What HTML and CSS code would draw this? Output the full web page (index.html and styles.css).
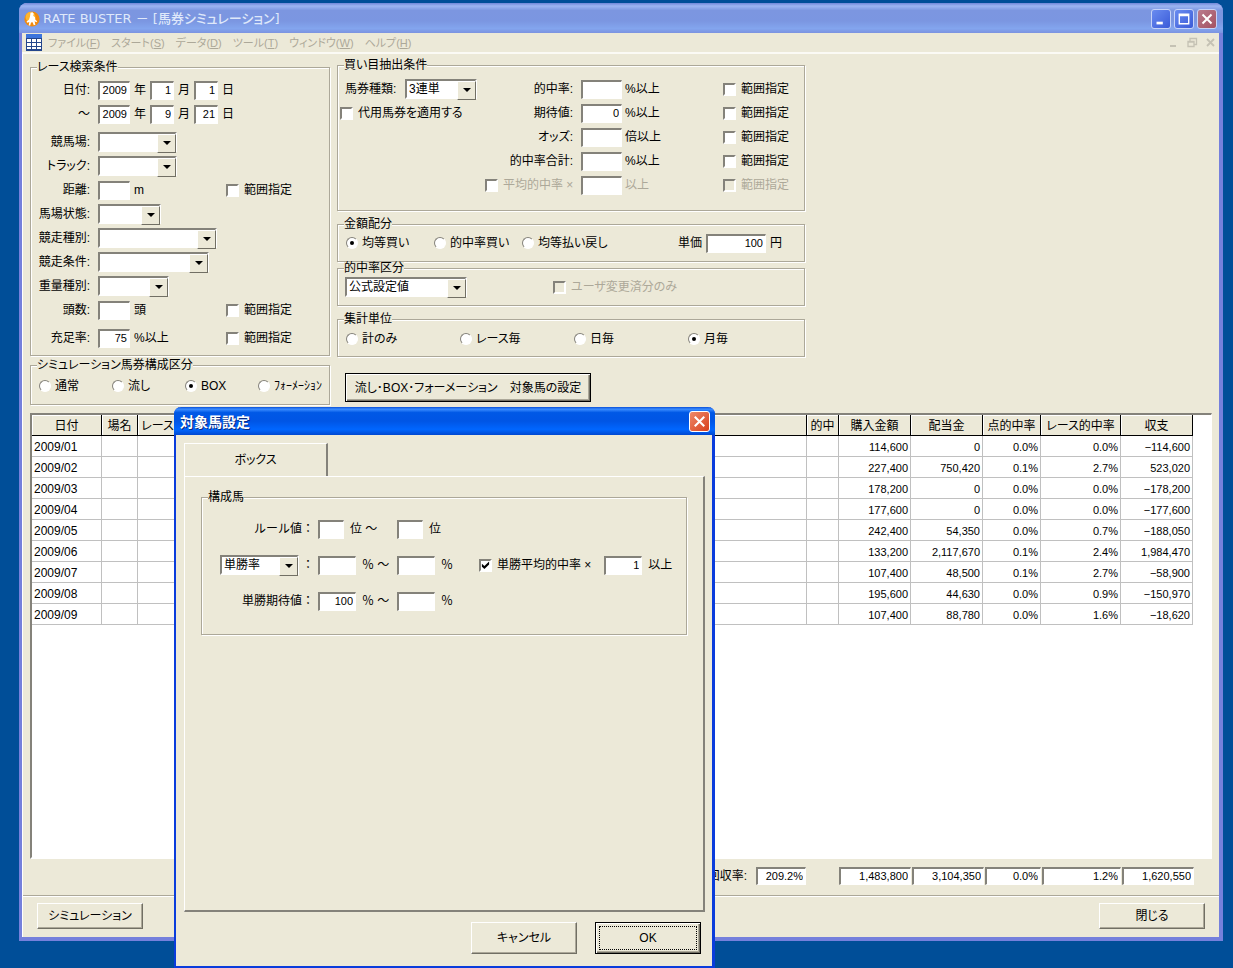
FILE: index.html
```html
<!DOCTYPE html>
<html lang="ja">
<head>
  <meta charset="UTF-8">
  <meta name="viewport" content="width=device-width, initial-scale=1.0">
  <title>RATE BUSTER - [馬券シミュレーション]</title>
  <link rel="stylesheet" href="styles.css">
</head>
<body>
  <div class="window">
    <header class="titlebar">
      <svg class="app-icon" viewBox="0 0 16 16">
        <circle cx="8" cy="8" r="7.6" fill="#f28a0c"/>
        <circle cx="6.5" cy="6" r="5" fill="#ffb52e"/>
        <path d="M6.500 1.800l2-.6 1.300 1.500-.6 2 1.800 1.600.4 2.500 1.800 1.500-.8.900-1.800-1 .8 3.600-1.600.4-1.200-3-1.600.2-.8 3.200H4.700l.6-3.600-2 .8-.8-1 2.600-2.200L6 5.500z" fill="#fff"/>
      </svg>
      <h1>RATE BUSTER － [馬券シミュレーション]</h1>
      <div class="caption-buttons">
        <button type="button" class="caption" aria-label="最小化"><svg viewBox="0 0 20 20"><path d="M5 13h7v3H5z" fill="#fff"/></svg></button>
        <button type="button" class="caption" aria-label="最大化"><svg viewBox="0 0 20 20"><path d="M4 4h12v12H4zM5.500 7v7.500h9V7z" fill="#fff" fill-rule="evenodd"/></svg></button>
        <button type="button" class="caption dim-close" aria-label="閉じる"><svg viewBox="0 0 20 20"><path d="M5 5l10 10M15 5L5 15" stroke="#fff" stroke-width="2.200"/></svg></button>
      </div>
    </header>

    <nav class="menubar">
      <svg class="mdi-icon" viewBox="0 0 16 17">
        <path d="M0 0h16v17H0z" fill="#24468c"/>
        <path d="M0 0h16v4H0z" fill="#3c74dc"/>
        <path d="M1 5h4v3H1zM6 5h4v3H6zM11 5h4v3h-4zM1 9h4v3H1zM6 9h4v3H6zM11 9h4v3h-4zM1 13h4v2H1zM6 13h4v2H6zM11 13h4v2h-4z" fill="#fff"/>
      </svg>
      <a href="#">ファイル(<u>F</u>)</a>
      <a href="#">スタート(<u>S</u>)</a>
      <a href="#">データ(<u>D</u>)</a>
      <a href="#">ツール(<u>T</u>)</a>
      <a href="#">ウィンドウ(<u>W</u>)</a>
      <a href="#">ヘルプ(<u>H</u>)</a>
      <svg class="mdi-buttons" viewBox="0 0 48 12" fill="none" stroke="#c5c2b4">
        <path d="M2 9h6" stroke-width="2"/>
        <path d="M20 4.500h6v5h-6zM22 4V1.500h6.500v6H26M20 5h6" stroke-width="1.300"/>
        <path d="M39 2l7 7M46 2l-7 7" stroke-width="1.800"/>
      </svg>
    </nav>

    <main class="client">
      <form class="conditions">
        <div class="column search-column">
          <fieldset class="search">
            <legend>レース検索条件</legend>
            <div class="row">
              <span class="name">日付:</span>
              <input type="text" class="w32" value="2009" aria-label="開始年">年
              <input type="text" class="w24" value="1" aria-label="開始月">月
              <input type="text" class="w24" value="1" aria-label="開始日">日
            </div>
            <div class="row">
              <span class="name">～</span>
              <input type="text" class="w32" value="2009" aria-label="終了年">年
              <input type="text" class="w24" value="9" aria-label="終了月">月
              <input type="text" class="w24" value="21" aria-label="終了日">日
            </div>
            <div class="row spaced">
              <label class="name" for="course">競馬場:</label>
              <span class="combo w79"><select id="course"><option></option></select></span>
            </div>
            <div class="row">
              <label class="name" for="track">トラック:</label>
              <span class="combo w79"><select id="track"><option></option></select></span>
            </div>
            <div class="row">
              <label class="name" for="distance">距離:</label>
              <input type="text" class="w32" id="distance">m
              <label class="range"><input type="checkbox">範囲指定</label>
            </div>
            <div class="row">
              <label class="name" for="going">馬場状態:</label>
              <span class="combo w63"><select id="going"><option></option></select></span>
            </div>
            <div class="row">
              <label class="name" for="raceType">競走種別:</label>
              <span class="combo w119"><select id="raceType"><option></option></select></span>
            </div>
            <div class="row">
              <label class="name" for="raceClass">競走条件:</label>
              <span class="combo w111"><select id="raceClass"><option></option></select></span>
            </div>
            <div class="row">
              <label class="name" for="weight">重量種別:</label>
              <span class="combo w71"><select id="weight"><option></option></select></span>
            </div>
            <div class="row">
              <label class="name" for="heads">頭数:</label>
              <input type="text" class="w32" id="heads">頭
              <label class="range"><input type="checkbox">範囲指定</label>
            </div>
            <div class="row spaced">
              <label class="name" for="fill">充足率:</label>
              <input type="text" class="w32" id="fill" value="75">%以上
              <label class="range"><input type="checkbox">範囲指定</label>
            </div>
          </fieldset>

          <fieldset class="composition">
            <legend>シミュレーション馬券構成区分</legend>
            <div class="choices step73">
              <label><input type="radio" name="composition">通常</label>
              <label><input type="radio" name="composition">流し</label>
              <label><input type="radio" name="composition" checked>BOX</label>
              <label><input type="radio" name="composition">ﾌｫｰﾒｰｼｮﾝ</label>
            </div>
          </fieldset>
        </div>

        <div class="column bet-column">
          <fieldset class="extract">
            <legend>買い目抽出条件</legend>
            <div class="ticket">
              <div class="row ticket-type">
                <label for="ticket">馬券種類:</label>
                <span class="combo w72"><select id="ticket"><option>3連単</option></select></span>
              </div>
              <div class="row">
                <label class="check"><input type="checkbox">代用馬券を適用する</label>
              </div>
            </div>
            <div class="limits">
              <div class="row">
                <label class="limit" for="hit">的中率:</label>
                <input type="text" class="w41" id="hit">%以上
                <label class="range"><input type="checkbox">範囲指定</label>
              </div>
              <div class="row">
                <label class="limit" for="expect">期待値:</label>
                <input type="text" class="w41" id="expect" value="0">%以上
                <label class="range"><input type="checkbox">範囲指定</label>
              </div>
              <div class="row">
                <label class="limit" for="odds">オッズ:</label>
                <input type="text" class="w41" id="odds">倍以上
                <label class="range"><input type="checkbox">範囲指定</label>
              </div>
              <div class="row">
                <label class="limit" for="hitTotal">的中率合計:</label>
                <input type="text" class="w41" id="hitTotal">%以上
                <label class="range"><input type="checkbox">範囲指定</label>
              </div>
              <div class="row dim">
                <label class="check average"><input type="checkbox">平均的中率 ×</label>
                <input type="text" class="w41" aria-label="平均的中率の倍率">以上
                <label class="range"><input type="checkbox" disabled>範囲指定</label>
              </div>
            </div>
          </fieldset>

          <fieldset class="money">
            <legend>金額配分</legend>
            <div class="choices step88">
              <label><input type="radio" name="money" checked>均等買い</label>
              <label><input type="radio" name="money">的中率買い</label>
              <label><input type="radio" name="money">均等払い戻し</label>
              <div class="row unit">
                <label for="unit">単価</label>
                <input type="text" class="w60" id="unit" value="100">円
              </div>
            </div>
          </fieldset>

          <fieldset class="rate-kind">
            <legend>的中率区分</legend>
            <div class="row">
              <span class="combo w122"><select aria-label="的中率区分"><option>公式設定値</option></select></span>
              <label class="check dim"><input type="checkbox" disabled>ユーザ変更済分のみ</label>
            </div>
          </fieldset>

          <fieldset class="total-unit">
            <legend>集計単位</legend>
            <div class="choices step114">
              <label><input type="radio" name="total">計のみ</label>
              <label><input type="radio" name="total">レース毎</label>
              <label><input type="radio" name="total">日毎</label>
              <label><input type="radio" name="total" checked>月毎</label>
            </div>
          </fieldset>

          <button type="button" class="btn default target">流し･BOX･フォーメーション　対象馬の設定</button>
        </div>
      </form>

      <div class="results">
        <table>
          <colgroup>
            <col class="c-date"><col class="c-place"><col class="c-race"><col><col class="c-hit">
            <col class="c-money"><col class="c-money"><col class="c-rate"><col class="c-race-rate"><col class="c-money">
          </colgroup>
          <thead>
            <tr><th>日付</th><th>場名</th><th>レース</th><th></th><th>的中</th><th>購入金額</th><th>配当金</th><th>点的中率</th><th>レース的中率</th><th>収支</th></tr>
          </thead>
          <tbody>
            <tr><td>2009/01</td><td></td><td></td><td></td><td></td><td>114,600</td><td>0</td><td>0.0%</td><td>0.0%</td><td>−114,600</td></tr>
            <tr><td>2009/02</td><td></td><td></td><td></td><td></td><td>227,400</td><td>750,420</td><td>0.1%</td><td>2.7%</td><td>523,020</td></tr>
            <tr><td>2009/03</td><td></td><td></td><td></td><td></td><td>178,200</td><td>0</td><td>0.0%</td><td>0.0%</td><td>−178,200</td></tr>
            <tr><td>2009/04</td><td></td><td></td><td></td><td></td><td>177,600</td><td>0</td><td>0.0%</td><td>0.0%</td><td>−177,600</td></tr>
            <tr><td>2009/05</td><td></td><td></td><td></td><td></td><td>242,400</td><td>54,350</td><td>0.0%</td><td>0.7%</td><td>−188,050</td></tr>
            <tr><td>2009/06</td><td></td><td></td><td></td><td></td><td>133,200</td><td>2,117,670</td><td>0.1%</td><td>2.4%</td><td>1,984,470</td></tr>
            <tr><td>2009/07</td><td></td><td></td><td></td><td></td><td>107,400</td><td>48,500</td><td>0.1%</td><td>2.7%</td><td>−58,900</td></tr>
            <tr><td>2009/08</td><td></td><td></td><td></td><td></td><td>195,600</td><td>44,630</td><td>0.0%</td><td>0.9%</td><td>−150,970</td></tr>
            <tr><td>2009/09</td><td></td><td></td><td></td><td></td><td>107,400</td><td>88,780</td><td>0.0%</td><td>1.6%</td><td>−18,620</td></tr>
          </tbody>
        </table>
      </div>

      <div class="totals">
        <label for="recovery">回収率:</label>
        <input type="text" class="w50 recovery" id="recovery" value="209.2%" readonly>
        <input type="text" class="w72" value="1,483,800" aria-label="購入金額合計" readonly>
        <input type="text" class="w72" value="3,104,350" aria-label="配当金合計" readonly>
        <input type="text" class="w56" value="0.0%" aria-label="点的中率" readonly>
        <input type="text" class="w79" value="1.2%" aria-label="レース的中率" readonly>
        <input type="text" class="w72" value="1,620,550" aria-label="収支合計" readonly>
      </div>

      <footer class="actions">
        <button type="button" class="btn">シミュレーション</button>
        <button type="button" class="btn">閉じる</button>
      </footer>
    </main>
  </div>

  <section class="dialog" role="dialog" aria-labelledby="dialogTitle">
    <header class="dialog-title">
      <h2 id="dialogTitle">対象馬設定</h2>
      <button type="button" class="caption close" aria-label="閉じる"><svg viewBox="0 0 20 20"><path d="M5 5l10 10M15 5L5 15" stroke="#fff" stroke-width="2.200"/></svg></button>
    </header>
    <div class="dialog-body">
      <button type="button" class="tab">ボックス</button>
      <div class="tab-page">
        <fieldset class="members">
          <legend>構成馬</legend>
          <div class="member-row">
            <span class="member-name">ルール値：</span>
            <span class="row"><input type="text" class="w26" aria-label="ルール値 下限">位 ～</span>
            <span class="row"><input type="text" class="w26" aria-label="ルール値 上限">位</span>
          </div>
          <div class="member-row">
            <span class="member-name"><span class="combo w79"><select aria-label="率の種類"><option>単勝率</option></select></span>：</span>
            <span class="row"><input type="text" class="w38" aria-label="単勝率 下限">％ ～</span>
            <span class="row"><input type="text" class="w38" aria-label="単勝率 上限">％</span>
            <span class="row">
              <label class="check"><input type="checkbox" checked>単勝平均的中率 ×</label>
              <input type="text" class="w38" value="1" aria-label="倍率">以上
            </span>
          </div>
          <div class="member-row">
            <span class="member-name">単勝期待値：</span>
            <span class="row"><input type="text" class="w38" value="100" aria-label="単勝期待値 下限">％ ～</span>
            <span class="row"><input type="text" class="w38" aria-label="単勝期待値 上限">％</span>
          </div>
        </fieldset>
      </div>
      <div class="dialog-buttons">
        <button type="button" class="btn">キャンセル</button>
        <button type="button" class="btn default focused">OK</button>
      </div>
    </div>
  </section>
</body>
</html>
```
FILE: styles.css
```css
* {
  margin: 0;
  padding: 0;
  box-sizing: border-box;
}

body {
  position: relative;
  display: flex;
  min-height: 100vh;
  padding: 3px 10px 27px 19px;
  background: #004e98;
  color: #000;
  font-family: "Liberation Sans", "Noto Sans CJK JP", sans-serif;
  font-size: 12px;
  line-height: 16px;
  font-feature-settings: "palt";
}

button,
input,
select {
  font: inherit;
  font-feature-settings: inherit;
  color: inherit;
}

/* Main window */
.window {
  flex: 1;
  display: flex;
  flex-direction: column;
  border: solid #7580dc;
  border-width: 0 4px 4px 3px;
  border-radius: 8px 8px 0 0;
  background: #ece9d8;
}

.titlebar {
  display: flex;
  align-items: center;
  height: 30px;
  margin: 0 -4px 0 -3px;
  padding: 2px 6px 0 5px;
  border-radius: 8px 8px 0 0;
  background: linear-gradient(#7086d8, #9db5f2 10%, #7c96e0 25%, #7b96e1 60%, #83a5ee 85%, #7c93e0);
}

.titlebar h1 {
  flex: 1;
  margin-left: 3px;
  color: #dfe8fa;
  font-family: "DejaVu Sans", "Noto Sans CJK JP", sans-serif;
  font-size: 13px;
  font-weight: 500;
}

.app-icon {
  width: 16px;
  height: 16px;
}

.caption-buttons {
  display: flex;
  gap: 3px;
}

.caption {
  width: 20px;
  height: 20px;
  border: 1px solid #c6d3f8;
  border-radius: 3px;
  background: linear-gradient(135deg, #6a8cf0, #3a5bd8);
}

.caption svg {
  display: block;
  width: 18px;
  height: 18px;
}

.caption.dim-close {
  background: linear-gradient(135deg, #b97b8c, #a45263);
}

.caption.close {
  width: 21px;
  height: 21px;
  border-color: #fff;
  background: linear-gradient(135deg, #ee8a6a, #d8401c);
}

.caption.close svg {
  width: 19px;
  height: 19px;
}

.menubar {
  display: flex;
  align-items: center;
  gap: 11px;
  height: 21px;
  padding: 0 3px 0 4px;
  border-bottom: 2px solid #fbfaf5;
}

.menubar a {
  color: #aca899;
  font-size: 11px;
  text-decoration: none;
}

.mdi-icon {
  width: 16px;
  height: 17px;
  margin-right: -5px;
}

.mdi-buttons {
  width: 48px;
  height: 12px;
  margin-left: auto;
}

.client {
  flex: 1;
  display: flex;
  flex-direction: column;
  border-left: 1px solid #fff;
}

/* Group boxes */
.conditions {
  display: grid;
  grid-template-columns: 300px 468px;
  gap: 7px;
  padding: 5px 7px 8px;
}

fieldset {
  min-width: 0;
  border: 1px solid #aca899;
  box-shadow: 1px 1px #fff, inset 1px 1px #fff;
}

legend {
  height: 12px;
  margin-left: 6px;
  background: #ece9d8;
  line-height: 12px;
}

.search-column {
  padding-top: 2px;
}

.row {
  display: flex;
  align-items: center;
  gap: 4px;
  height: 24px;
  white-space: nowrap;
}

.row.spaced {
  margin-top: 4px;
}

.search {
  padding: 5px 37px 5px 0;
}

.name {
  width: 59px;
  margin-right: 4px;
  text-align: right;
}

.range,
.check {
  display: flex;
  align-items: center;
  gap: 5px;
}

.range {
  margin-left: auto;
}

.composition {
  margin-top: 3px;
  padding: 4px 0 7px;
}

.choices {
  display: flex;
  align-items: center;
  height: 24px;
  padding-left: 8px;
}

.choices > label {
  display: flex;
  align-items: center;
  gap: 4px;
  white-space: nowrap;
}

.step73 {
  height: 22px;
}

.step73 > label {
  width: 73px;
  flex-shrink: 0;
}

.step88 > label {
  width: 88px;
}

.step114 > label {
  width: 114px;
}

.extract > .ticket {
  width: 147px;
}

.extract {
  display: flex;
  padding: 6px 15px 13px 0;
}

.ticket .row {
  padding-left: 2px;
}

.ticket .ticket-type {
  justify-content: space-between;
  padding: 0 8px 0 7px;
}

.limits {
  flex: 1;
}

.limits .row {
  gap: 3px;
}

.limit {
  width: 93px;
  padding-right: 5px;
  text-align: right;
}

.average {
  width: 93px;
}

.dim {
  color: #aca899;
}

.money {
  margin-top: 7px;
  padding: 1px 22px 6px 0;
}

.unit {
  margin-left: auto;
}

.rate-kind {
  padding: 1px 0 6px;
}

.rate-kind .row {
  padding-left: 7px;
}

.rate-kind .check {
  margin-left: 82px;
}

.total-unit {
  margin-top: 7px;
  padding: 2px 0 5px;
}

.btn.target {
  width: 246px;
  height: 29px;
  margin: 16px 0 0 8px;
}

/* Controls */
input[type="text"] {
  height: 19px;
  padding: 0 2px 1px 0;
  border: 2px solid;
  border-color: #84827a #fff #fff #84827a;
  border-bottom-width: 1px;
  border-right-width: 1px;
  background: #fff;
  color: #000;
  font-size: 11px;
  text-align: right;
}

input[type="checkbox"] {
  width: 13px;
  height: 13px;
  flex-shrink: 0;
  appearance: none;
  border: 2px solid;
  border-color: #84827a #fff #fff #84827a;
  background: #fff;
}

input[type="checkbox"]:disabled {
  background: #ece9d8;
}

input[type="checkbox"]:checked::before {
  content: "";
  display: block;
  width: 9px;
  height: 9px;
  background: #000;
  clip-path: polygon(10% 35%, 38% 60%, 90% 10%, 90% 45%, 38% 95%, 10% 70%);
}

input[type="radio"] {
  width: 12px;
  height: 12px;
  flex-shrink: 0;
  appearance: none;
  border: 1px solid;
  border-color: #84827a #fff #fff #84827a;
  border-radius: 50%;
  background: #fff;
}

input[type="radio"]:checked::before {
  content: "";
  display: block;
  width: 4px;
  height: 4px;
  margin: 3px;
  border-radius: 50%;
  background: #000;
}

.combo {
  position: relative;
  display: inline-block;
  height: 20px;
}

.combo select {
  width: 100%;
  height: 20px;
  padding-left: 2px;
  appearance: none;
  border: 2px solid;
  border-color: #84827a #fff #fff #84827a;
  border-radius: 0;
  background: #fff;
  line-height: 15px;
}

/* Drop-down button drawn over the select */
.combo::before {
  content: "";
  position: absolute;
  top: 2px;
  right: 1px;
  width: 17px;
  height: 17px;
  border: 1px solid;
  border-color: #fff #716f64 #716f64 #fff;
  background: #ece9d8;
  pointer-events: none;
}

.combo::after {
  content: "";
  position: absolute;
  top: 9px;
  right: 6px;
  border: solid transparent;
  border-width: 4px 4px 0;
  border-top-color: #000;
  pointer-events: none;
}

.btn {
  width: 106px;
  height: 26px;
  border: 1px solid;
  border-color: #fff #716f64 #716f64 #fff;
  box-shadow: inset -1px -1px #aca899;
  background: #ece9d8;
}

.btn.default {
  border-color: #000;
  box-shadow: inset 1px 1px #fff, inset -1px -1px #716f64, inset -2px -2px #aca899;
}

.w24 { width: 24px; }
.w26 { width: 26px; }
.w32 { width: 32px; }
.w38 { width: 38px; }
.w41 { width: 41px; }
.w50 { width: 50px; }
.w56 { width: 56px; }
.w60 { width: 60px; }
.w63 { width: 63px; }
.w71 { width: 71px; }
.w72 { width: 72px; }
.w79 { width: 79px; }
.w111 { width: 111px; }
.w119 { width: 119px; }
.w122 { width: 122px; }

/* Result grid */
.results {
  flex: 1;
  margin: 0 7px;
  border: 2px solid;
  border-color: #84827a #fff #fff #84827a;
  border-right-width: 1px;
  background: #fff;
}

.results table {
  width: calc(100% - 18px);
  table-layout: fixed;
  border-collapse: separate;
  border-spacing: 0;
}

.results th {
  height: 21px;
  padding-top: 1px;
  border: solid #000;
  border-width: 0 1px 1px 0;
  box-shadow: inset 1px 1px #fff;
  background: #ece9d8;
  font-weight: normal;
  white-space: nowrap;
}

.results td {
  height: 21px;
  padding: 2px 2px 0;
  border: solid #c0c0c0;
  border-width: 0 1px 1px 0;
  font-size: 11px;
  text-align: right;
}

.results td:first-child {
  font-size: 12px;
  text-align: left;
}

.c-date { width: 70px; }
.c-place { width: 36px; }
.c-race { width: 40px; }
.c-hit { width: 32px; }
.c-money { width: 72px; }
.c-rate { width: 58px; }
.c-race-rate { width: 80px; }

.totals {
  display: flex;
  justify-content: flex-end;
  align-items: center;
  gap: 1px;
  margin: 8px 25px 10px 0;
}

.totals label {
  margin-right: 8px;
}

.totals .recovery {
  margin-right: 32px;
}

.totals input[type="text"] {
  height: 18px;
}

.actions {
  display: flex;
  justify-content: space-between;
  padding: 7px 14px 8px;
  border-top: 1px solid #aca899;
  box-shadow: inset 0 1px #fff;
}

/* Target horse dialog */
.dialog {
  position: absolute;
  top: 407px;
  bottom: 0;
  left: 174px;
  width: 541px;
  display: flex;
  flex-direction: column;
  border: solid #0a3cdc;
  border-width: 0 3px 2px 2px;
  border-radius: 7px 7px 0 0;
  background: #ece9d8;
}

.dialog-title {
  display: flex;
  justify-content: space-between;
  align-items: center;
  height: 28px;
  margin: 0 -3px 0 -2px;
  padding: 1px 5px 0 6px;
  border-radius: 7px 7px 0 0;
  background: linear-gradient(#0a50d8, #3a8cff 8%, #0058e6 20%, #0055e5 50%, #0066ff 80%, #0048d0);
}

.dialog-title h2 {
  color: #fff;
  font-size: 14px;
  text-shadow: 1px 1px #0a2a80;
}

.dialog-body {
  flex: 1;
  display: flex;
  flex-direction: column;
  padding: 8px 7px 12px 8px;
}

.tab {
  width: 144px;
  height: 33px;
  border: solid;
  border-width: 1px 2px 0 1px;
  border-color: #fff #84827a #fff #fff;
  background: #ece9d8;
}

.tab-page {
  flex: 1;
  padding: 14px 16px;
  border: solid;
  border-width: 1px 2px 2px 1px;
  border-color: #fff #84827a #84827a #fff;
}

.members {
  padding: 8px 0 15px;
  font-feature-settings: normal;
}

.member-row {
  display: grid;
  grid-template-columns: 112px 75px 78px 1fr;
  column-gap: 4px;
  align-items: center;
  height: 36px;
}

.member-row .row {
  gap: 6px;
}

.member-name {
  display: flex;
  justify-content: flex-end;
  align-items: center;
}

.member-name .combo {
  margin-right: 3px;
}

.member-row .check {
  margin-right: 7px;
}

.dialog-buttons {
  display: flex;
  justify-content: flex-end;
  gap: 18px;
  margin-top: 10px;
  padding-right: 4px;
}

.dialog-buttons .btn {
  height: 32px;
}

.focused {
  outline: 1px dotted #000;
  outline-offset: -5px;
}
```
